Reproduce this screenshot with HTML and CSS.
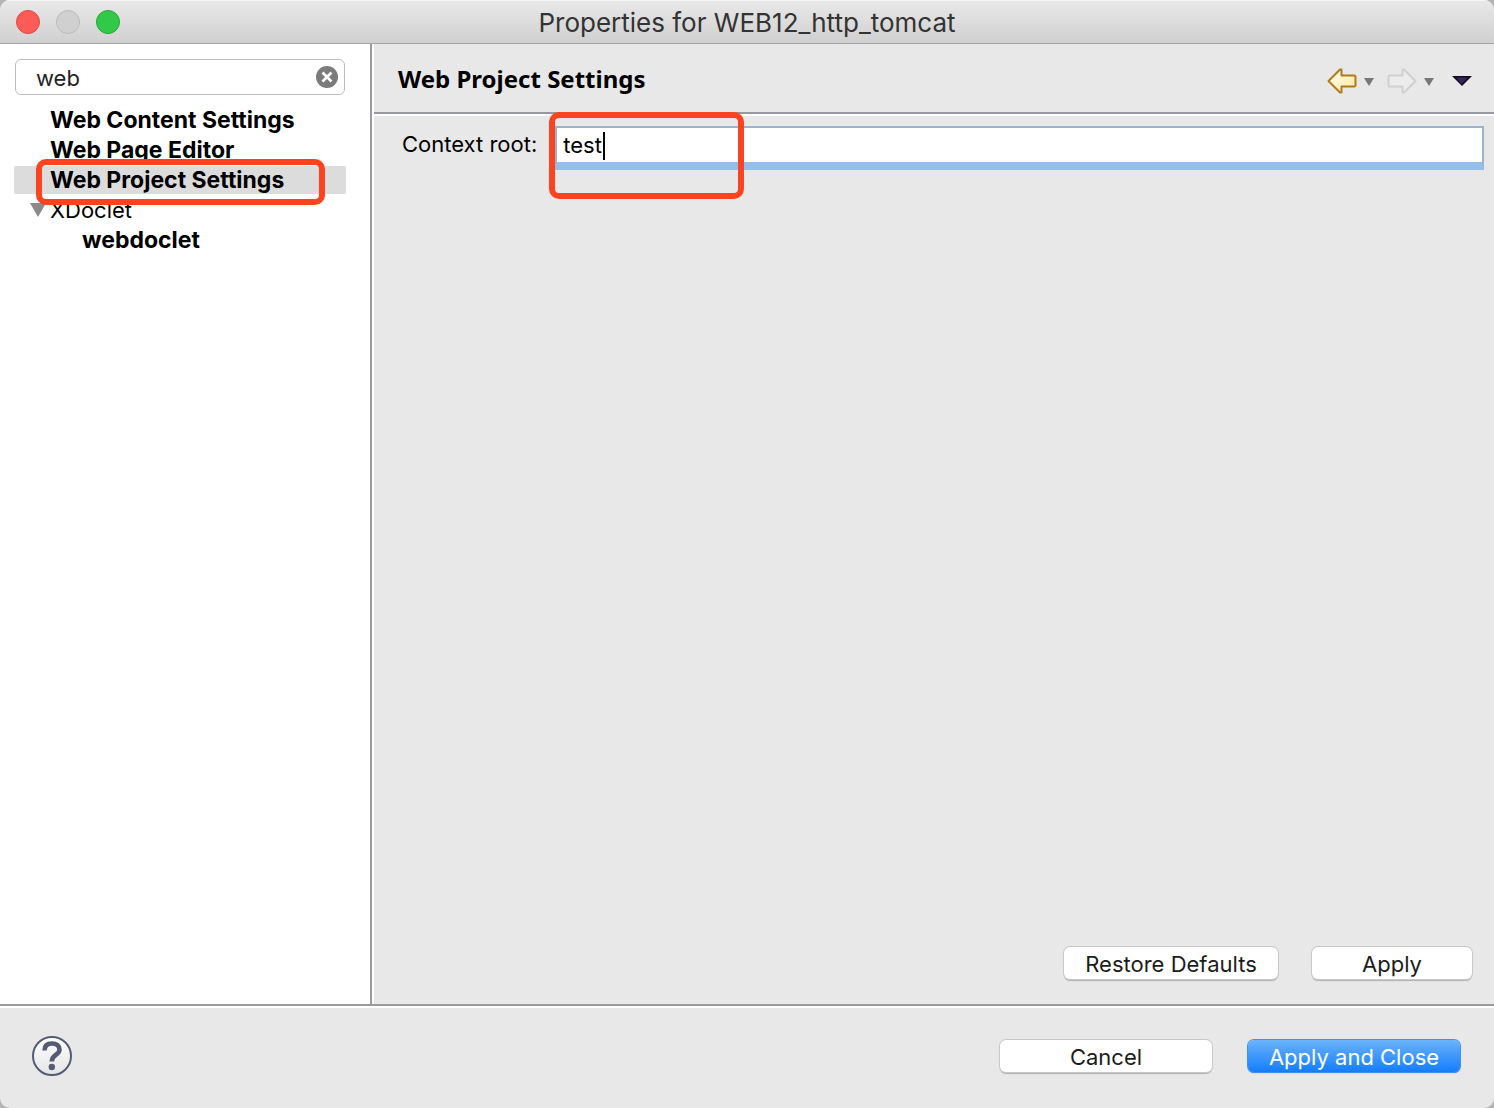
FILE: index.html
```html
<!DOCTYPE html>
<html lang="en">
<head>
  <meta charset="utf-8">
  <title>Properties for WEB12_http_tomcat</title>
  <meta name="viewport" content="width=device-width, initial-scale=1.0">
  <link rel="stylesheet" href="styles.css">
</head>
<body>
  <div class="window">
    <!-- Title bar -->
    <header class="titlebar">
      <div class="lights">
        <button class="light close" aria-label="Close"></button>
        <button class="light minimize" aria-label="Minimize" disabled></button>
        <button class="light zoom" aria-label="Zoom"></button>
      </div>
      <div class="title">Properties for WEB12_http_tomcat</div>
    </header>

    <div class="content">
      <!-- Filter and page tree -->
      <nav class="sidebar">
        <div class="filter">
          <input type="text" value="web" aria-label="Filter">
          <button class="clear" aria-label="Clear filter">
            <svg width="22" height="22" viewBox="0 0 22 22">
              <circle cx="11" cy="11" r="11" fill="#7b7b7b"/>
              <path d="M6.5 6.5l9 9M15.5 6.5l-9 9" stroke="#fff" stroke-width="2.6"/>
            </svg>
          </button>
        </div>
        <ul class="tree">
          <li><a href="#">Web Content Settings</a></li>
          <li><a href="#">Web Page Editor</a></li>
          <li class="selected"><a href="#">Web Project Settings</a><span class="mark mark-tree"></span></li>
          <li class="group">
            <svg class="twisty" width="16" height="14" viewBox="0 0 16 14"><path d="M0 0h16L8 14z" fill="#8a8a8a"/></svg>
            <a href="#">XDoclet</a>
          </li>
          <li class="child"><a href="#">webdoclet</a></li>
        </ul>
      </nav>

      <!-- Settings page -->
      <main class="page">
        <div class="page-header">
          <h1>Web Project Settings</h1>
          <div class="tools">
            <button aria-label="Back">
              <svg width="30" height="26" viewBox="0 0 30 26">
                <defs>
                  <linearGradient id="gold" x1="0" y1="0" x2="1" y2="1">
                    <stop offset="0" stop-color="#fffdf0"/>
                    <stop offset="1" stop-color="#ffe9a0"/>
                  </linearGradient>
                </defs>
                <path d="M1.5 13L13 1.5h1.5v6h13l1 1v9l-1 1h-13v6H13z" fill="url(#gold)" stroke="#b07a1c" stroke-width="2" stroke-linejoin="round"/>
              </svg>
            </button>
            <button class="drop" aria-label="Back history">
              <svg width="10" height="8" viewBox="0 0 10 8"><path d="M0 0h10L5 8z" fill="#777"/></svg>
            </button>
            <button aria-label="Forward" disabled>
              <svg width="30" height="26" viewBox="0 0 30 26">
                <path d="M28.5 13L17 1.5h-1.5v6h-13l-1 1v9l1 1h13v6H17z" fill="#ececec" stroke="#d0d0d0" stroke-width="2" stroke-linejoin="round"/>
              </svg>
            </button>
            <button class="drop" aria-label="Forward history">
              <svg width="10" height="8" viewBox="0 0 10 8"><path d="M0 0h10L5 8z" fill="#777"/></svg>
            </button>
            <button class="view-menu" aria-label="View menu">
              <svg width="20" height="10" viewBox="0 0 20 10"><path d="M0 0h20L10 10z" fill="#100d18"/><path d="M4 1.5h12L9.5 8z" fill="#352464"/></svg>
            </button>
          </div>
        </div>

        <div class="form-row">
          <label for="context-root">Context root:</label>
          <div class="field">
            <input type="text" id="context-root" value="test">
            <span class="caret"></span>
            <span class="mark mark-field"></span>
          </div>
        </div>

        <div class="page-buttons">
          <button class="btn btn-restore">Restore Defaults</button>
          <button class="btn btn-apply">Apply</button>
        </div>
      </main>
    </div>

    <!-- Dialog buttons -->
    <footer class="footer">
      <button class="help" aria-label="Help">
        <svg width="40" height="40" viewBox="0 0 40 40">
          <defs>
            <linearGradient id="disc" x1="0" y1="0" x2="0" y2="1">
              <stop offset="0" stop-color="#fff"/>
              <stop offset="1" stop-color="#e4e4e4"/>
            </linearGradient>
          </defs>
          <circle cx="20" cy="20" r="19" fill="url(#disc)" stroke="#555b75" stroke-width="2"/>
          <path d="M12.5 14.500C12.500 9.500 15.500 7.500 20 7.500C24.500 7.500 27.500 9.800 27.500 13.700C27.500 19 19.800 18.500 19.800 25.500" fill="none" stroke="#555b75" stroke-width="4.600"/>
          <circle cx="19.800" cy="31" r="3.200" fill="#555b75"/>
        </svg>
      </button>
      <div class="footer-buttons">
        <button class="btn btn-wide">Cancel</button>
        <button class="btn btn-wide btn-primary">Apply and Close</button>
      </div>
    </footer>
  </div>
</body>
</html>
```

FILE: styles.css
```css
/* Base */
* {
  box-sizing: border-box;
}

body {
  margin: 0;
  background: #b4b4b4;
  color: #000;
  font-family: Inter, "Liberation Sans", sans-serif;
  font-size: 22px;
  line-height: 28px;
}

button {
  padding: 0;
  border: none;
  background: none;
  font: inherit;
  color: inherit;
}

svg {
  display: block;
}

.window {
  display: flex;
  flex-direction: column;
  min-height: 100vh;
  background: #e8e8e8;
  border-radius: 10px;
  overflow: hidden;
}

/* Title bar */
.titlebar {
  display: grid;
  grid-template-columns: 1fr auto 1fr;
  align-items: center;
  height: 44px;
  padding: 0 16px;
  background: linear-gradient(#e9e9e9, #d0d0d0);
  border-bottom: 1px solid #a5a5a5;
  box-shadow: inset 0 1px #f5f5f5;
}

.lights {
  display: flex;
  gap: 16px;
}

.light {
  width: 24px;
  height: 24px;
  border: 1px solid #e2463f;
  border-radius: 50%;
  background: #fc5b57;
}

.minimize {
  border-color: #bababa;
  background: #d0d0d0;
}

.zoom {
  border-color: #1fa931;
  background: #33c948;
}

.title {
  padding-top: 2px;
  color: #333;
  font-size: 26px;
}

/* Columns */
.content {
  display: flex;
  flex: 1;
}

.sidebar {
  width: 372px;
  padding: 15px 24px 0 14px;
  background: #fff;
  border-right: 2px solid #9b9b9b;
}

/* Filter box */
.filter {
  display: flex;
  align-items: center;
  height: 36px;
  margin: 0 1px 11px;
  padding: 0 6px 0 20px;
  border: 1px solid #bdbdbd;
  border-radius: 6px;
}

.filter input {
  flex: 1;
  min-width: 0;
  padding: 2px 0 0;
  border: none;
  outline: none;
  background: none;
  font: inherit;
  color: #222;
}

/* Page tree */
.tree {
  display: flex;
  flex-direction: column;
  gap: 2px;
  margin: 0;
  padding: 0;
  list-style: none;
  font-size: 23px;
  font-weight: 700;
}

.tree li {
  position: relative;
  display: flex;
  height: 28px;
  padding-left: 36px;
}

.tree a {
  color: #000;
  text-decoration: none;
}

.tree .selected {
  z-index: 1;
  background: #dcdcdc;
  border-radius: 2px;
}

.tree .group {
  align-items: center;
  gap: 4px;
  padding-left: 16px;
  font-size: 22px;
  font-weight: 400;
}

.tree .child {
  padding-left: 68px;
}

/* Red highlight boxes */
.mark {
  position: absolute;
  border: 6px solid #fb431f;
  border-radius: 10px;
  pointer-events: none;
}

.mark-tree {
  top: -7px;
  bottom: -11px;
  left: 22px;
  right: 21px;
}

.mark-field {
  top: -14px;
  left: -6px;
  width: 195px;
  height: 87px;
}

/* Settings page */
.page {
  display: flex;
  flex: 1;
  flex-direction: column;
  border-left: 2px solid #fff;
}

.page-header {
  display: flex;
  align-items: center;
  justify-content: space-between;
  height: 70px;
  padding: 2px 22px 0 24px;
  border-bottom: 2px solid #969a9e;
  box-shadow: 0 2px #fff;
}

.page-header h1 {
  margin: 0;
  font-family: "Noto Sans", "Open Sans", sans-serif;
  font-size: 24px;
  font-weight: 700;
}

.tools {
  display: flex;
  align-items: center;
  padding-top: 3px;
}

.drop {
  margin: 2px 13px 0 7px;
}

.view-menu {
  margin-left: 5px;
}

.form-row {
  display: flex;
  gap: 18px;
  margin-top: 12px;
  padding: 0 10px 0 28px;
}

.form-row label {
  padding-top: 4px;
}

.field {
  position: relative;
  flex: 1;
}

.field input {
  display: block;
  width: 100%;
  height: 44px;
  padding: 4px 6px;
  border: 2px solid #99b4d1;
  border-bottom: 8px solid #94bfec;
  border-radius: 0;
  outline: none;
  background: #fff;
  font: inherit;
}

.caret {
  position: absolute;
  top: 6px;
  left: 48px;
  width: 2px;
  height: 28px;
  background: #000;
}

/* Buttons */
.btn {
  height: 32px;
  padding-top: 2px;
  border-radius: 6px;
  background: #fff;
  box-shadow: 0 0 0 1px #c8c8c8, 0 2px 1px #b0b0b0;
  color: #1c1c1c;
}

.page-buttons {
  display: flex;
  justify-content: flex-end;
  gap: 34px;
  margin-top: auto;
  padding: 0 22px 25px;
}

.btn-restore {
  width: 214px;
}

.btn-apply {
  width: 160px;
}

.btn-wide {
  width: 212px;
}

.btn-primary {
  background: linear-gradient(#6bb3fa, #147dfd);
  box-shadow: 0 0 0 1px #3f93ee, 0 1px 1px #0a5fd0;
  color: #fff;
}

/* Footer */
.footer {
  display: flex;
  align-items: center;
  justify-content: space-between;
  height: 104px;
  padding: 0 34px 3px 32px;
  border-top: 2px solid #9b9b9b;
  box-shadow: inset 0 2px #fff;
}

.footer-buttons {
  display: flex;
  gap: 36px;
}
```
